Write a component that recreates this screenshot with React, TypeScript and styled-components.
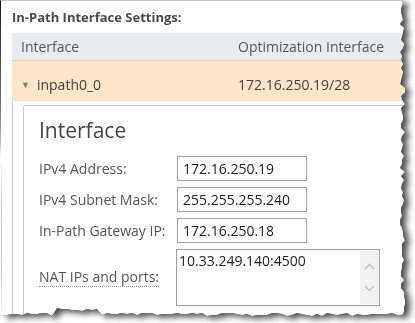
import React from "react";
import styled, { createGlobalStyle } from "styled-components";

const GlobalStyle = createGlobalStyle`
  html, body { margin: 0; padding: 0; background: #ffffff; }
  body { font-family: "Open Sans", "Noto Sans", Arial, sans-serif; }
  * { box-sizing: border-box; }
`;

function buildTornEdge(): string {
  let seed = 7;
  const rnd = () => {
    seed = (seed * 9301 + 49297) % 233280;
    return seed / 233280;
  };
  const pts: string[] = ["0px 0px"];
  for (let y = 0; y <= 314; y += 4) {
    const x = 400 + Math.round(rnd() * 5);
    pts.push(`${x}px ${y}px`);
  }
  for (let x = 402; x >= 0; x -= 5) {
    const base = 313;
    const y = base + Math.round(rnd() * 3) - (x > 55 && x < 100 ? 5 : 0);
    pts.push(`${x}px ${y}px`);
  }
  return `polygon(${pts.join(", ")})`;
}

const TORN = buildTornEdge();

const Shadow = styled.div`
  width: 415px;
  height: 323px;
  filter: drop-shadow(0 0 0.6px rgba(0, 0, 0, 0.9)) drop-shadow(5px 3px 3px rgba(0, 0, 0, 0.7));
`;

const Paper = styled.div`
  width: 415px;
  height: 323px;
  background: #ffffff;
  border-left: 1px solid #111;
  border-top: 1px solid #c8c8c8;
  clip-path: ${TORN};
  overflow: hidden;
`;

const Title = styled.div`
  padding: 8px 0 0 11px;
  height: 32px;
  font-size: 13px;
  font-weight: 700;
  color: #4a4a4a;
  line-height: 17px;
`;

const Table = styled.div`
  margin-left: 11px;
  width: 420px;
`;

const Row = styled.div<{ $head?: boolean }>`
  display: grid;
  grid-template-columns: 217px 1fr;
  align-items: center;
  height: ${(p) => (p.$head ? "27px" : "41px")};
  padding: ${(p) => (p.$head ? "0" : "7px 0 0")};
  background: ${(p) => (p.$head ? "#e9ecef" : "#fde5c8")};
  border-top: ${(p) => (p.$head ? "none" : "1px solid #e3d2bb")};
  font-size: 14px;
  color: ${(p) => (p.$head ? "#555" : "#3f3f3f")};
`;

const Cell = styled.div`
  padding-left: 9px;
  display: flex;
  align-items: center;
  gap: 7px;
  white-space: nowrap;
`;

const Caret = styled.span`
  font-size: 9px;
  color: #7a7a7a;
  margin-top: -1px;
`;

const Detail = styled.div`
  border-left: 1px solid #cfcfcf;
  padding: 4px 0 0 10px;
  height: 230px;
`;

const Box = styled.div`
  border: 1px solid #cdcdcd;
  padding: 7px 0 0 15px;
  height: 260px;
`;

const Heading = styled.div`
  font-size: 21px;
  color: #444;
  line-height: 28px;
  margin: 3px 0 12px;
`;

const Form = styled.div`
  display: grid;
  grid-template-columns: 137px auto;
  row-gap: 6px;
  align-items: center;
`;

const Label = styled.div<{ $dotted?: boolean }>`
  font-size: 14px;
  color: #555;
  white-space: nowrap;
  justify-self: start;
  ${(p) => (p.$dotted ? "border-bottom: 1px dotted #999; line-height: 17px; padding-bottom: 1px;" : "")}
`;

const Input = styled.div`
  width: 130px;
  height: 25px;
  border: 1px solid #a3a3a3;
  padding-left: 5px;
  font-size: 14px;
  color: #222;
  line-height: 23px;
  margin-left: 1px;
`;

const TextArea = styled.div`
  width: 204px;
  height: 57px;
  border: 1px solid #9e9e9e;
  display: flex;
  font-size: 14px;
  color: #222;
`;

const AreaText = styled.div`
  flex: 1;
  padding: 1px 0 0 2px;
  line-height: 20px;
`;

const ScrollBar = styled.div`
  width: 18px;
  margin: 1px 1px 1px 0;
  background: #f1f1f1;
  display: flex;
  flex-direction: column;
  justify-content: space-between;
  align-items: center;
  padding: 12px 0 12px;
`;

const Chevron = ({ up }: { up?: boolean }) => (
  <svg width="11" height="7" viewBox="0 0 11 7">
    <path
      d={up ? "M1 6 L5.5 1.5 L10 6" : "M1 1 L5.5 5.5 L10 1"}
      fill="none"
      stroke="#bdbdbd"
      strokeWidth="1.3"
    />
  </svg>
);

export default function App() {
  return (
    <>
      <GlobalStyle />
      <Shadow>
        <Paper>
          <Title>In-Path Interface Settings:</Title>
          <Table>
            <Row $head>
              <Cell>Interface</Cell>
              <Cell>Optimization Interface</Cell>
            </Row>
            <Row>
              <Cell>
                <Caret>▼</Caret>inpath0_0
              </Cell>
              <Cell>172.16.250.19/28</Cell>
            </Row>
            <Detail>
              <Box>
                <Heading>Interface</Heading>
                <Form>
                  <Label>IPv4 Address:</Label>
                  <Input>172.16.250.19</Input>
                  <Label>IPv4 Subnet Mask:</Label>
                  <Input>255.255.255.240</Input>
                  <Label>In-Path Gateway IP:</Label>
                  <Input>172.16.250.18</Input>
                  <Label $dotted>NAT IPs and ports:</Label>
                  <TextArea>
                    <AreaText>10.33.249.140:4500</AreaText>
                    <ScrollBar>
                      <Chevron up />
                      <Chevron />
                    </ScrollBar>
                  </TextArea>
                </Form>
              </Box>
            </Detail>
          </Table>
        </Paper>
      </Shadow>
    </>
  );
}
